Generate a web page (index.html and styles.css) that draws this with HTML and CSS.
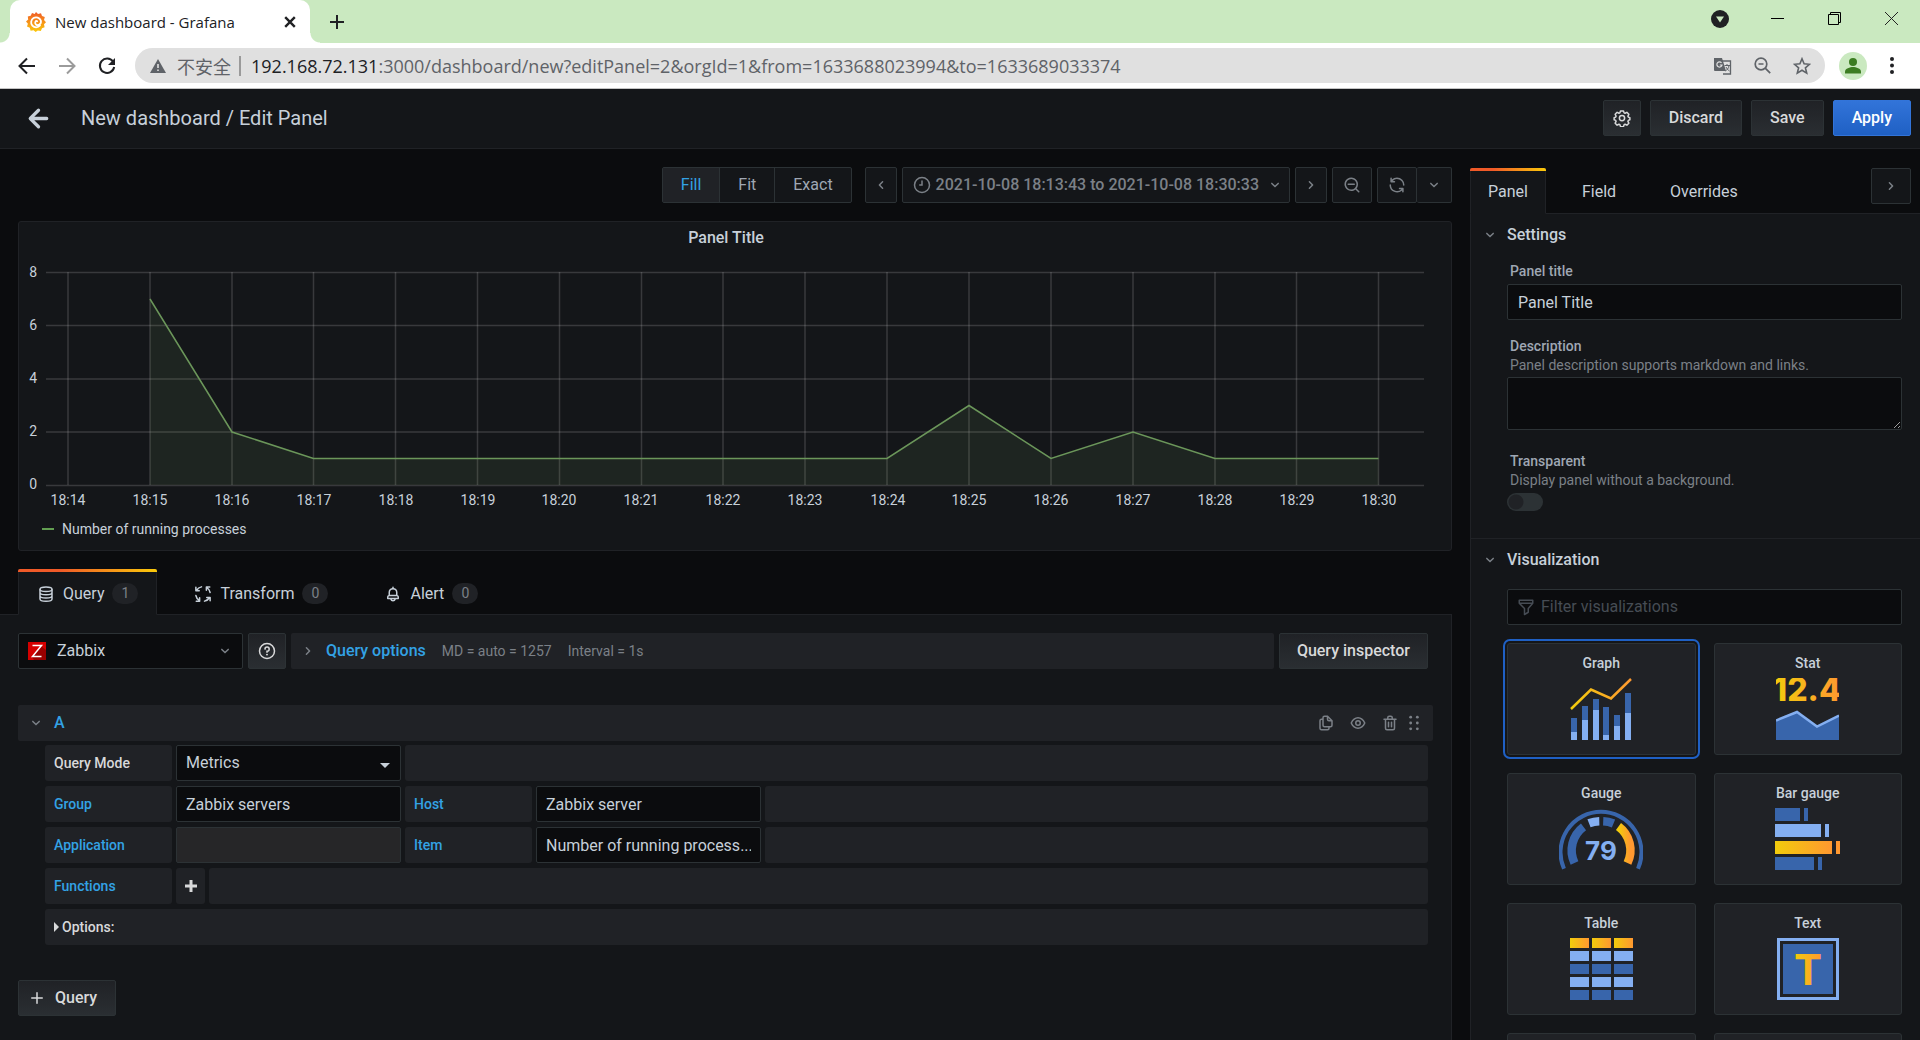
FILE: index.html
```html
<!DOCTYPE html>
<html lang="en">
<head>
<meta charset="utf-8">
<title>New dashboard - Grafana</title>
<link rel="stylesheet" href="styles.css">
</head>
<body>
<svg class="defs" aria-hidden="true">
  <defs>
    <linearGradient id="warm" x1="0" x2="1" y1="0" y2="0"><stop offset="0" stop-color="#f2cc0c"/><stop offset="1" stop-color="#ff9830"/></linearGradient>
    <linearGradient id="warm-line" gradientUnits="userSpaceOnUse" x1="0" x2="62" y1="0" y2="0"><stop offset="0" stop-color="#f2cc0c"/><stop offset="1" stop-color="#ff9830"/></linearGradient>
    <linearGradient id="logo" x1="0" x2="0" y1="0" y2="1"><stop offset="0" stop-color="#f05a28"/><stop offset="1" stop-color="#fbca0a"/></linearGradient>
  </defs>
  <symbol id="angle-down" viewBox="0 0 24 24"><path d="M17,9.17a1,1,0,0,0-1.41,0L12,12.71,8.46,9.17a1,1,0,0,0-1.41,0,1,1,0,0,0,0,1.42l4.24,4.24a1,1,0,0,0,1.42,0L17,10.59A1,1,0,0,0,17,9.17Z"/></symbol>
  <symbol id="angle-right" viewBox="0 0 24 24"><path d="M14.83,11.29,10.59,7.05a1,1,0,0,0-1.42,0,1,1,0,0,0,0,1.41L12.71,12,9.17,15.54a1,1,0,0,0,0,1.41,1,1,0,0,0,.71.29,1,1,0,0,0,.71-.29l4.24-4.24A1,1,0,0,0,14.83,11.29Z"/></symbol>
  <symbol id="angle-left" viewBox="0 0 24 24"><path d="M9.17,11.29l4.24-4.24a1,1,0,0,1,1.42,0,1,1,0,0,1,0,1.41L11.29,12l3.54,3.54a1,1,0,0,1,0,1.41,1,1,0,0,1-.71.29,1,1,0,0,1-.71-.29L9.17,12.71A1,1,0,0,1,9.17,11.29Z"/></symbol>
  <symbol id="search-minus" viewBox="0 0 24 24"><path d="M21.71,20.29,18,16.61A9,9,0,1,0,16.61,18l3.68,3.68a1,1,0,0,0,1.42,0A1,1,0,0,0,21.71,20.29ZM11,18a7,7,0,1,1,7-7A7,7,0,0,1,11,18Zm4-8H7a1,1,0,0,0,0,2h8a1,1,0,0,0,0-2Z"/></symbol>
  <symbol id="sync" viewBox="0 0 24 24"><path d="M19.91,15.51H15.38a1,1,0,0,0,0,2h2.4A8,8,0,0,1,4,12a1,1,0,0,0-2,0,10,10,0,0,0,16.88,7.23V21a1,1,0,0,0,2,0V16.5A1,1,0,0,0,19.91,15.51ZM12,2A10,10,0,0,0,5.12,4.77V3a1,1,0,0,0-2,0V7.5a1,1,0,0,0,1,1h4.5a1,1,0,0,0,0-2H6.22A8,8,0,0,1,20,12a1,1,0,0,0,2,0A10,10,0,0,0,12,2Z"/></symbol>
  <symbol id="arrow-left" viewBox="5 5 14 14"><path d="M17,11H9.41l3.3-3.29a1,1,0,1,0-1.42-1.42l-5,5a1,1,0,0,0,0,1.42l5,5a1,1,0,0,0,1.42-1.42L9.41,13H17a1,1,0,0,0,0-2Z"/></symbol>
  <symbol id="trash" viewBox="0 0 24 24"><path d="M10,18a1,1,0,0,0,1-1V11a1,1,0,0,0-2,0v6A1,1,0,0,0,10,18ZM20,6H16V5a3,3,0,0,0-3-3H11A3,3,0,0,0,8,5V6H4A1,1,0,0,0,4,8H5V19a3,3,0,0,0,3,3h8a3,3,0,0,0,3-3V8h1a1,1,0,0,0,0-2ZM10,5a1,1,0,0,1,1-1h2a1,1,0,0,1,1,1V6H10Zm7,14a1,1,0,0,1-1,1H8a1,1,0,0,1-1-1V8H17Zm-3-1a1,1,0,0,0,1-1V11a1,1,0,0,0-2,0v6A1,1,0,0,0,14,18Z"/></symbol>
  <symbol id="eye" viewBox="0 0 24 24"><path d="M21.92,11.6C19.9,6.91,16.1,4,12,4S4.1,6.91,2.08,11.6a1,1,0,0,0,0,.8C4.1,17.09,7.9,20,12,20s7.9-2.91,9.92-7.6A1,1,0,0,0,21.92,11.6ZM12,18c-3.17,0-6.17-2.29-7.9-6C5.83,8.29,8.83,6,12,6s6.17,2.29,7.9,6C18.17,15.71,15.17,18,12,18ZM12,8a4,4,0,1,0,4,4A4,4,0,0,0,12,8Zm0,6a2,2,0,1,1,2-2A2,2,0,0,1,12,14Z"/></symbol>
  <symbol id="copy" viewBox="0 0 24 24"><path d="M21,8.94a1.31,1.31,0,0,0-.06-.27l0-.09a1.07,1.07,0,0,0-.19-.28h0l-6-6h0a1.07,1.07,0,0,0-.28-.19.32.32,0,0,0-.09,0A.88.88,0,0,0,14.05,2H10A3,3,0,0,0,7,5V6H6A3,3,0,0,0,3,9V19a3,3,0,0,0,3,3h8a3,3,0,0,0,3-3V18h1a3,3,0,0,0,3-3V9S21,9,21,8.94ZM15,5.41,17.59,8H16a1,1,0,0,1-1-1ZM15,19a1,1,0,0,1-1,1H6a1,1,0,0,1-1-1V9A1,1,0,0,1,6,8H7v7a3,3,0,0,0,3,3h5Zm4-4a1,1,0,0,1-1,1H10a1,1,0,0,1-1-1V5a1,1,0,0,1,1-1h3V7a3,3,0,0,0,3,3h3Z"/></symbol>
  <symbol id="bell" viewBox="0 0 24 24"><path d="M18,13.18V10a6,6,0,0,0-5-5.91V3a1,1,0,0,0-2,0V4.09A6,6,0,0,0,6,10v3.18A3,3,0,0,0,4,16v2a1,1,0,0,0,1,1H8.14a4,4,0,0,0,7.72,0H19a1,1,0,0,0,1-1V16A3,3,0,0,0,18,13.18ZM8,10a4,4,0,0,1,8,0v3H8Zm4,10a2,2,0,0,1-1.72-1h3.44A2,2,0,0,1,12,20Zm6-3H6V16a1,1,0,0,1,1-1H17a1,1,0,0,1,1,1Z"/></symbol>
  <symbol id="clock" viewBox="0 0 24 24"><g fill="none" stroke="currentColor" stroke-width="2" stroke-linecap="round"><circle cx="12" cy="12" r="10"/><path d="M12 6.500V12H9"/></g></symbol>
  <symbol id="cog" viewBox="0 0 24 24"><g fill="none" stroke="currentColor" stroke-width="2" stroke-linejoin="round"><path d="M10 2.500h4l.8 2.700 1.200.5 2.500-1.300 2.600 2.700-1.200 2.400.5 1.300 2.100.9v2.600l-2.100.9-.5 1.300 1.200 2.400-2.600 2.700-2.500-1.300-1.200.5-.8 2.700h-4l-.8-2.700-1.200-.5-2.500 1.300-2.600-2.700 1.200-2.400-.5-1.300-2.100-.9v-2.600l2.100-.9.5-1.300-1.200-2.400 2.600-2.700 2.500 1.300 1.200-.5z"/><circle cx="12" cy="12" r="3.500"/></g></symbol>
  <symbol id="question" viewBox="0 0 24 24"><g fill="none" stroke="currentColor" stroke-width="2" stroke-linecap="round"><circle cx="12" cy="12" r="10"/><path d="M9.300 9.500A2.800 2.800 0 1 1 12 12.400V13.500"/></g><circle cx="12" cy="16.800" r="1.300"/></symbol>
  <symbol id="database" viewBox="0 0 24 24"><g fill="none" stroke="currentColor" stroke-width="2"><ellipse cx="12" cy="5.500" rx="8" ry="3"/><path d="M4 5.500v13c0 1.600 3.600 3 8 3s8-1.400 8-3v-13M4 10c0 1.600 3.600 3 8 3s8-1.400 8-3M4 14.300c0 1.600 3.600 3 8 3s8-1.400 8-3"/></g></symbol>
  <symbol id="process" viewBox="0 0 24 24"><g fill="none" stroke="currentColor" stroke-width="2" stroke-linecap="round" stroke-linejoin="round"><path d="M2.500 3v4.500H7M3.500 7A9.500 9.500 0 0 1 10 2.500M21 2.500h-4.500V7M17 3.500a9.500 9.500 0 0 1 4.500 6.500M21.500 21v-4.500H17M20.500 17a9.500 9.500 0 0 1-6.500 4.500M3 21.500h4.500V17M7 20.500A9.500 9.500 0 0 1 2.500 14"/></g></symbol>
  <symbol id="filter" viewBox="0 0 24 24"><g fill="none" stroke="currentColor" stroke-width="2" stroke-linejoin="round"><path d="M3 3h18v4l-6 7v5l-5 3v-8L3 7zM3 7h18"/></g></symbol>
  <symbol id="plus" viewBox="0 0 24 24"><path d="M19,11H13V5a1,1,0,0,0-2,0v6H5a1,1,0,0,0,0,2h6v6a1,1,0,0,0,2,0V13h6a1,1,0,0,0,0-2Z"/></symbol>
  <symbol id="drag" viewBox="0 0 12 18"><circle cx="2" cy="2" r="1.700"/><circle cx="10" cy="2" r="1.700"/><circle cx="2" cy="9" r="1.700"/><circle cx="10" cy="9" r="1.700"/><circle cx="2" cy="16" r="1.700"/><circle cx="10" cy="16" r="1.700"/></symbol>
</svg>

<div class="window">
  <div class="tabstrip">
    <div class="browser-tab">
      <svg class="favicon" viewBox="0 0 20 20"><path fill="url(#logo)" d="M10 0l2 2 3-.8 1 2.800 2.800 1-.8 3 2 2.300-2 2 .6 3-2.600 1-1.200 2.700-3-.6L9.600 20l-2-1.800-3 .5-.8-2.900L1 14.600l.9-2.800L0 9.600l2.200-2L1.800 4.600l2.900-.8L6 1l2.700.9z"/><path fill="none" stroke="#fff" stroke-width="1.800" stroke-linecap="round" d="M14.800 8.500A5 5 0 1 0 14 13.500M14.800 8.500c1 4-3 5.500-4.800 4-1.800-1.700-.3-4 1.200-3.300"/></svg>
      <span class="browser-tab-title">New dashboard - Grafana</span>
      <button class="bare" aria-label="Close tab"><svg class="close" viewBox="0 0 10 10"><path d="M1 1l8 8M9 1L1 9"/></svg></button>
    </div>
    <button class="bare new-tab" aria-label="New tab"><svg viewBox="0 0 16 16"><path d="M8 1v14M1 8h14"/></svg></button>
    <div class="window-buttons">
      <button class="bare" aria-label="Search tabs"><svg width="18" height="18" viewBox="0 0 18 18"><circle cx="9" cy="9" r="9" fill="#202124"/><path d="M5 6.500h8L9 12.500z" fill="#cae9c0"/></svg></button>
      <button class="bare" aria-label="Minimize"><svg width="13" height="13" viewBox="0 0 13 13"><path d="M0 6.500h13" stroke="#000"/></svg></button>
      <button class="bare" aria-label="Restore"><svg width="13" height="13" viewBox="0 0 13 13"><path d="M.5 2.500h10v10H.5zM2.500 2.500v-2h10v10h-2" fill="none" stroke="#000"/></svg></button>
      <button class="bare" aria-label="Close"><svg width="13" height="13" viewBox="0 0 13 13"><path d="M0 0l13 13M13 0L0 13" stroke="#222"/></svg></button>
    </div>
  </div>

  <div class="addressbar">
    <button class="bare nav" aria-label="Back"><svg viewBox="0 0 18 18"><path d="M17 9H2M9 1.500L1.500 9 9 16.500"/></svg></button>
    <button class="bare nav nav-off" aria-label="Forward"><svg viewBox="0 0 18 18"><path d="M1 9h15M9 1.500L16.500 9 9 16.500"/></svg></button>
    <button class="bare nav" aria-label="Reload"><svg viewBox="0 0 18 18"><path d="M15 4.500A7.200 7.200 0 1 0 16.200 10"/><path d="M17 1v7h-7z" fill="currentColor" stroke="none"/></svg></button>
    <div class="omnibox">
      <svg class="warn" viewBox="0 0 16 14"><path d="M8 0l8 14H0z" fill="#5f6368"/><path d="M8 5v4M8 10.500v1.500" stroke="#e0e0e0" stroke-width="1.600"/></svg>
      <span class="insecure" lang="zh">不安全</span>
      <span class="url" role="textbox" aria-label="Address"><span class="host">192.168.72.131</span>:3000/dashboard/new?editPanel=2&amp;orgId=1&amp;from=1633688023994&amp;to=1633689033374</span>
      <button class="bare" aria-label="Translate"><svg width="18" height="18" viewBox="0 0 18 18"><path d="M7 4h9.500v13H9" fill="none" stroke="#5f6368" stroke-width="1.300"/><path d="M0 1h8l4 13H1q-1 0-1-1z" fill="#5f6368"/><path d="M7.500 5.800A2.600 2.600 0 1 0 8 8H5.800" fill="none" stroke="#e0e0e0" stroke-width="1.200"/><path d="M10.500 8.500H16M13 7v1.500M15 8.500c-.5 3-2 4.500-3.500 5.500M12 10c1 2 2 3 3.500 4" fill="none" stroke="#5f6368"/></svg></button>
      <button class="bare" aria-label="Zoom"><svg width="17" height="17" viewBox="0 0 17 17"><g fill="none" stroke="#5f6368" stroke-width="1.700"><circle cx="7" cy="7" r="5.800"/><path d="M11.200 11.200L16.200 16.200M4.500 7h5"/></g></svg></button>
      <button class="bare" aria-label="Bookmark"><svg width="18" height="18" viewBox="0 0 18 18"><path d="M9 1.800l2.100 5 5.400.5-4.100 3.500 1.300 5.300L9 13.200l-4.700 2.900 1.300-5.300L1.500 7.300l5.400-.5z" fill="none" stroke="#5f6368" stroke-width="1.600"/></svg></button>
    </div>
    <button class="bare profile" aria-label="Profile"><svg viewBox="0 0 28 28"><circle cx="14" cy="14" r="14" fill="#cae9c0"/><circle cx="14" cy="10" r="4" fill="#3c7d22"/><path d="M6 21.500v-2c0-3 5-4.500 8-4.500s8 1.500 8 4.500v2z" fill="#3c7d22"/></svg></button>
    <button class="bare kebab" aria-label="Menu"><svg width="4" height="17" viewBox="0 0 4 17"><circle cx="2" cy="2" r="2"/><circle cx="2" cy="8.500" r="2"/><circle cx="2" cy="15" r="2"/></svg></button>
  </div>

  <header class="app-header">
    <button class="bare back" aria-label="Go back"><svg><use href="#arrow-left"/></svg></button>
    <h1>New dashboard / Edit Panel</h1>
    <button class="btn btn-icon" aria-label="Dashboard settings"><svg class="icon"><use href="#cog"/></svg></button>
    <button class="btn">Discard</button>
    <button class="btn">Save</button>
    <button class="btn btn-primary">Apply</button>
  </header>

  <div class="editor">
    <main class="main">
      <div class="viz-toolbar">
        <div class="radios">
          <label class="radio radio-on"><input type="radio" name="size" checked>Fill</label>
          <label class="radio"><input type="radio" name="size">Fit</label>
          <label class="radio"><input type="radio" name="size">Exact</label>
        </div>
        <div class="timebar">
          <button class="tool tool-narrow" aria-label="Earlier"><svg class="icon"><use href="#angle-left"/></svg></button>
          <button class="tool tool-range"><svg class="icon"><use href="#clock"/></svg><span>2021-10-08 18:13:43 to 2021-10-08 18:30:33</span><svg class="icon"><use href="#angle-down"/></svg></button>
          <button class="tool tool-narrow" aria-label="Later"><svg class="icon"><use href="#angle-right"/></svg></button>
          <button class="tool" aria-label="Zoom out"><svg class="icon"><use href="#search-minus"/></svg></button>
          <div class="tool-pair">
            <button class="tool" aria-label="Refresh"><svg class="icon"><use href="#sync"/></svg></button>
            <button class="tool tool-drop" aria-label="Refresh interval"><svg class="icon"><use href="#angle-down"/></svg></button>
          </div>
        </div>
      </div>

      <section class="graph-panel">
        <h2>Panel Title</h2>
        <svg class="chart" viewBox="0 0 1432 260">
          <g class="grid">
            <path d="M27 19.500H1405M27 72.500H1405M27 126H1405M27 179H1405M27 232.500H1405"/>
            <path d="M49 19V232M131 19V232M213 19V232M294.500 19V232M376.500 19V232M458.500 19V232M540.500 19V232M622.500 19V232M704 19V232M786 19V232M868 19V232M950 19V232M1032 19V232M1114 19V232M1196 19V232M1277.500 19V232M1359.500 19V232"/>
          </g>
          <path class="area" d="M131 46L213 179L294.500 205.500H868L950 152.500L1032 205.500L1114 179L1196 205.500H1359.500V232H131z"/>
          <path class="line" d="M131 46L213 179L294.500 205.500H868L950 152.500L1032 205.500L1114 179L1196 205.500H1359.500"/>
          <g class="axis-y"><text x="18" y="24">8</text><text x="18" y="77">6</text><text x="18" y="130">4</text><text x="18" y="183">2</text><text x="18" y="236">0</text></g>
          <g class="axis-x"><text x="49" y="252">18:14</text><text x="131" y="252">18:15</text><text x="213" y="252">18:16</text><text x="295" y="252">18:17</text><text x="377" y="252">18:18</text><text x="459" y="252">18:19</text><text x="540" y="252">18:20</text><text x="622" y="252">18:21</text><text x="704" y="252">18:22</text><text x="786" y="252">18:23</text><text x="869" y="252">18:24</text><text x="950" y="252">18:25</text><text x="1032" y="252">18:26</text><text x="1114" y="252">18:27</text><text x="1196" y="252">18:28</text><text x="1278" y="252">18:29</text><text x="1360" y="252">18:30</text></g>
        </svg>
        <div class="legend"><i></i>Number of running processes</div>
      </section>

      <nav class="tabs">
        <a class="tab tab-on" href="#query"><svg class="icon"><use href="#database"/></svg>Query<span class="count">1</span></a>
        <a class="tab" href="#transform"><svg class="icon"><use href="#process"/></svg>Transform<span class="count">0</span></a>
        <a class="tab" href="#alert"><svg class="icon"><use href="#bell"/></svg>Alert<span class="count">0</span></a>
      </nav>

      <section class="query-pane" id="query">
        <div class="source-row">
          <div class="select select-source">
            <svg class="zabbix" viewBox="0 0 18 18"><path d="M0 0h18v18H0z" fill="#d40000"/><path d="M13 4l5 4v10H6l-2-3z" fill="#900"/><path d="M4.500 3.500h9L4.500 14.500h9" fill="none" stroke="#fff" stroke-width="1.500"/></svg>
            <select aria-label="Data source"><option>Zabbix</option></select>
            <svg class="icon"><use href="#angle-down"/></svg>
          </div>
          <button class="btn btn-icon" aria-label="Help"><svg class="icon"><use href="#question"/></svg></button>
          <button class="options-bar"><svg class="icon"><use href="#angle-right"/></svg><b>Query options</b><span>MD = auto = 1257</span><span>Interval = 1s</span></button>
          <button class="btn">Query inspector</button>
        </div>

        <div class="query-head">
          <svg class="icon"><use href="#angle-down"/></svg>
          <b>A</b>
          <button class="bare" aria-label="Duplicate query"><svg class="icon"><use href="#copy"/></svg></button>
          <button class="bare" aria-label="Hide query"><svg class="icon"><use href="#eye"/></svg></button>
          <button class="bare" aria-label="Remove query"><svg class="icon"><use href="#trash"/></svg></button>
          <button class="bare" aria-label="Move query"><svg class="grip"><use href="#drag"/></svg></button>
        </div>

        <div class="query-form">
          <div class="row">
            <label class="cell plain" for="mode">Query Mode</label>
            <div class="select select-field"><select id="mode"><option>Metrics</option></select><svg class="caret" viewBox="0 0 10 5"><path d="M0 0h10L5 5z"/></svg></div>
            <span class="cell rest"></span>
          </div>
          <div class="row">
            <label class="cell" for="group">Group</label><input class="field" id="group" value="Zabbix servers">
            <label class="cell" for="host">Host</label><input class="field" id="host" value="Zabbix server">
            <span class="cell rest"></span>
          </div>
          <div class="row">
            <label class="cell" for="application">Application</label><input class="field field-empty" id="application">
            <label class="cell" for="item">Item</label><input class="field" id="item" value="Number of running process...">
            <span class="cell rest"></span>
          </div>
          <div class="row">
            <span class="cell">Functions</span>
            <button class="add-function" aria-label="Add function"><svg width="12" height="12" viewBox="0 0 12 12"><path d="M6 0v12M0 6h12"/></svg></button>
            <span class="cell rest"></span>
          </div>
          <div class="row">
            <button class="cell rest toggle-options"><svg width="5" height="10" viewBox="0 0 5 10"><path d="M0 0l5 5-5 5z"/></svg>Options:</button>
          </div>
        </div>

        <button class="btn add-query"><svg class="icon"><use href="#plus"/></svg>Query</button>
      </section>
    </main>

    <aside class="side">
      <nav class="tabs side-tabs">
        <a class="tab tab-on" href="#panel">Panel</a>
        <a class="tab" href="#field">Field</a>
        <a class="tab" href="#overrides">Overrides</a>
        <button class="tool collapse" aria-label="Collapse options"><svg class="icon"><use href="#angle-right"/></svg></button>
      </nav>
      <section class="group" id="panel">
        <h3><svg class="icon"><use href="#angle-down"/></svg>Settings</h3>
        <div class="group-body">
          <div class="form-item">
            <label for="title">Panel title</label>
            <input class="field" id="title" value="Panel Title">
          </div>
          <div class="form-item">
            <label for="description">Description</label>
            <p>Panel description supports markdown and links.</p>
            <textarea class="field" id="description"></textarea>
          </div>
          <div class="form-item">
            <label for="transparent">Transparent</label>
            <p>Display panel without a background.</p>
            <input class="switch" type="checkbox" id="transparent">
          </div>
        </div>
      </section>
      <section class="group">
        <h3><svg class="icon"><use href="#angle-down"/></svg>Visualization</h3>
        <div class="group-body">
          <div class="filter field">
            <svg class="icon"><use href="#filter"/></svg>
            <input aria-label="Filter visualizations" placeholder="Filter visualizations">
          </div>
          <div class="cards">
            <button class="card card-on">Graph
              <svg viewBox="0 0 62 62"><g fill="#3865ab"><path d="M1 40h6v22H1zM12 28h6v34h-6zM23 21h6v41h-6zM33 29h6v33h-6zM44 37h6v25h-6zM55 15h6v47h-6z"/></g><g fill="#84aff1"><path d="M1 54h6v8H1zM12 42h6v20h-6zM23 32h6v30h-6zM33 57h6v5h-6zM44 48h6v14h-6zM55 35h6v27h-6z"/></g><path d="M1 31L21 11.500l20 9L61 1" fill="none" stroke="url(#warm-line)" stroke-width="2.500"/></svg></button>
            <button class="card">Stat
              <svg viewBox="0 0 63 62"><text class="stat" x="31" y="23">12.4</text><path d="M0 43l21-9L41 49l22-11v24H0z" fill="#3865ab"/><path d="M0 42.500L21 34 41 48.500l22-11" fill="none" stroke="#84aff1" stroke-width="2.500"/></svg></button>
            <button class="card">Gauge
              <svg viewBox="0 0 84 62"><g fill="none"><path d="M5 60.800A40.500 40.500 0 1 1 79 60.800" stroke="#3865ab" stroke-width="4"/><path d="M15.500 55A29.500 29.500 0 0 1 24.500 18.800" stroke="#3865ab" stroke-width="8.500"/><path d="M30 15.300A29.500 29.500 0 0 1 40.300 13.200" stroke="#84aff1" stroke-width="8.500"/><path d="M44.200 13.200A29.500 29.500 0 0 1 54.500 15.500" stroke="#3865ab" stroke-width="8.500"/><path d="M59.500 18.500A29.500 29.500 0 0 1 68.500 55" stroke="url(#warm)" stroke-width="8.500"/></g><text class="gauge" x="42" y="52">79</text></svg></button>
            <button class="card">Bar gauge
              <svg viewBox="0 0 66 62"><path d="M0 0h25v13H0zM29 0h4v13h-4zM0 49h39v13H0zM43 49h4v13h-4z" fill="#3865ab"/><path d="M0 16h46v13H0zM50 16h4v13h-4z" fill="#84aff1"/><path d="M0 33h57v13H0z" fill="url(#warm)"/><path d="M61 33h4v13h-4z" fill="#ff9830"/></svg></button>
            <button class="card">Table
              <svg viewBox="0 0 63 62"><g fill="url(#warm)"><rect width="19" height="10"/><rect x="22" width="19" height="10"/><rect x="44" width="19" height="10"/></g><path d="M0 13h19v10H0zM22 13h19v10H22zM44 13h19v10H44zM0 39h19v10H0zM22 39h19v10H22zM44 39h19v10H44z" fill="#84aff1"/><path d="M0 26h19v10H0zM22 26h19v10H22zM44 26h19v10H44zM0 52h19v10H0zM22 52h19v10H22zM44 52h19v10H44z" fill="#3865ab"/></svg></button>
            <button class="card">Text
              <svg viewBox="0 0 62 62"><path d="M1.500 1.500h59v59h-59z" fill="none" stroke="#84aff1" stroke-width="3"/><path d="M6 6h50v50H6z" fill="#3865ab"/><text class="letter" x="31" y="47">T</text></svg></button>
            <button class="card" aria-label="Heatmap"></button>
            <button class="card" aria-label="Alert list"></button>
          </div>
        </div>
      </section>
    </aside>
  </div>
</div>
</body>
</html>
```
FILE: styles.css
```css
* { box-sizing: border-box; }

body {
  margin: 0;
  background: #0b0c0e;
  color: #c7d0d9;
  font: 16px/24px Roboto, "Liberation Sans", sans-serif;
}

h1, h2, h3, p { margin: 0; }
svg { display: block; fill: currentColor; flex: none; }
button, input, select, textarea { font: inherit; color: inherit; margin: 0; }
a { color: inherit; text-decoration: none; }

.defs { position: absolute; width: 0; height: 0; }
.icon { width: 18px; height: 18px; }
.bare { border: 0; padding: 0; background: none; display: flex; align-items: center; justify-content: center; }

.window { height: 100vh; display: flex; flex-direction: column; overflow: hidden; }

/* Browser chrome */
.tabstrip { height: 43px; flex: none; display: flex; background: #cae9c0; padding-left: 10px; color: #202124; }
.browser-tab {
  position: relative;
  width: 300px;
  display: flex;
  align-items: center;
  padding: 0 14px 0 16px;
  background: #fff;
  border-radius: 10px 10px 0 0;
  font: 15px/20px "Open Sans", "Noto Sans", sans-serif;
}
.browser-tab::before,
.browser-tab::after { content: ""; position: absolute; bottom: 0; width: 10px; height: 10px; }
.browser-tab::before { right: 100%; background: radial-gradient(circle at 0 0, #cae9c0 9px, #fff 10px); }
.browser-tab::after { left: 100%; background: radial-gradient(circle at 100% 0, #cae9c0 9px, #fff 10px); }
.favicon { width: 20px; height: 20px; margin-right: 9px; }
.browser-tab-title { flex: 1; white-space: nowrap; }
.close { width: 12px; height: 12px; stroke: #202124; stroke-width: 2; }
.new-tab { margin-left: 19px; }
.new-tab svg { width: 16px; height: 16px; stroke: #202124; stroke-width: 2; }
.window-buttons { margin-left: auto; display: flex; align-items: center; gap: 39px; padding: 0 20px 6px 0; }
.window-buttons .bare { width: 18px; }

.addressbar {
  height: 46px;
  flex: none;
  display: flex;
  align-items: center;
  padding: 0 26px 0 18px;
  background: #fff;
  border-bottom: 1px solid #c4c4c4;
  color: #202124;
}
.nav { margin-right: 22px; }
.nav:nth-child(3) { margin-right: 19px; }
.nav svg { width: 18px; height: 18px; fill: none; stroke: currentColor; stroke-width: 2; }
.nav-off { color: #9b9b9b; }
.omnibox {
  flex: 1;
  min-width: 0;
  height: 35px;
  display: flex;
  align-items: center;
  gap: 22px;
  padding: 0 14px 0 15px;
  border-radius: 18px;
  background: #e0e0e0;
  color: #5f6368;
  font: 18px/24px "Open Sans", "Noto Sans", "Noto Sans CJK SC", sans-serif;
}
.warn { width: 16px; height: 14px; }
.insecure { margin-left: -11px; padding-right: 8px; border-right: 2px solid #9a9a9a; line-height: 20px; white-space: nowrap; font-family: "Noto Sans CJK SC", sans-serif; }
.url { flex: 1; margin-left: -12px; white-space: nowrap; overflow: hidden; }
.host { color: #202124; }
.profile { margin-left: 14px; }
.profile svg { width: 28px; height: 28px; }
.kebab { margin-left: 23px; }

/* Application header */
.app-header {
  height: 60px;
  flex: none;
  display: flex;
  align-items: center;
  gap: 9px;
  padding: 0 9px 1px 27px;
  background: #141619;
  border-bottom: 1px solid #202226;
}
.back svg { width: 23px; height: 23px; }
h1 { flex: 1; padding-left: 22px; font-size: 20px; font-weight: 400; white-space: nowrap; }

.btn {
  height: 36px;
  flex: none;
  display: flex;
  align-items: center;
  padding: 0 18px;
  border: 1px solid #2c3235;
  border-radius: 2px;
  background: linear-gradient(#202226, #2a2e32);
  color: #d8d9da;
  font-weight: 500;
}
.btn-icon { padding: 0 9px; }
.btn-primary { border-color: #3274d9; background: linear-gradient(#3274d9, #1f60c4); color: #fff; }

/* Editor columns */
.editor { flex: 1; min-height: 0; display: flex; gap: 18px; }
.main { flex: 1; min-width: 0; display: flex; flex-direction: column; padding-top: 18px; }

.viz-toolbar { display: flex; justify-content: flex-end; gap: 13px; margin-bottom: 18px; }
.radios { display: flex; border: 1px solid #2c3235; border-radius: 2px; background: #141619; color: #9fa7b3; }
.radio { display: flex; align-items: center; height: 34px; padding: 0 18px; border-right: 1px solid #2c3235; }
.radio:last-child { border-right: 0; }
.radio input { appearance: none; width: 0; height: 0; }
.radio-on { background: #202226; color: #33a2e5; }
.timebar { display: flex; gap: 5px; color: #7b8087; }
.tool {
  height: 36px;
  min-width: 40px;
  display: flex;
  align-items: center;
  justify-content: center;
  padding: 0;
  border: 1px solid #2c3235;
  border-radius: 2px;
  background: #141619;
  color: #7b8087;
}
.tool-narrow { min-width: 32px; }
.tool-range { padding: 0 5px 0 10px; gap: 5px; font-weight: 500; }
.tool-range .icon:last-child { margin-left: 2px; }
.tool-pair { display: flex; }
.tool-drop { min-width: 35px; border-left: 0; }

/* Graph */
.graph-panel { flex: none; height: 330px; margin-left: 18px; border: 1px solid #202226; border-radius: 3px; background: #141619; overflow: hidden; }
h2 { padding: 2px 18px 1px 0; text-align: center; font-size: 16px; font-weight: 500; line-height: 28px; }
.chart { width: 100%; }
.grid { stroke: #c8c8c8; stroke-opacity: .2; stroke-width: 1.500; }
.area { fill: #7eb26d; fill-opacity: .1; }
.line { fill: none; stroke: #6b965a; stroke-width: 1.500; }
.axis-y, .axis-x { font-size: 14px; }
.axis-y { text-anchor: end; }
.axis-x { text-anchor: middle; }
.legend { display: flex; align-items: center; gap: 8px; padding: 4px 0 0 23px; font-size: 14px; }
.legend i { width: 12px; height: 2px; background: #629e51; }

/* Tabs */
.tabs { flex: none; display: flex; padding-left: 18px; }
.tab { position: relative; height: 46px; display: flex; align-items: center; gap: 8px; padding: 3px 18px 0; border: 1px solid transparent; white-space: nowrap; }
.main .tabs { margin-top: 18px; gap: 18px; }
.tab-on { background: #141619; border-color: #202226; border-bottom-color: #141619; border-radius: 2px 2px 0 0; }
.tab-on::before {
  content: "";
  position: absolute;
  left: -1px;
  right: -1px;
  top: -1px;
  height: 3px;
  border-radius: 2px 2px 0 0;
  background: linear-gradient(90deg, #f05a28 30%, #fbca0a);
}
.count { min-width: 26px; padding: 0 8px; border-radius: 11px; background: #202226; color: #7b8087; font-size: 14px; line-height: 21px; text-align: center; }

/* Query editor */
.query-pane { flex: 1; min-height: 0; margin-top: -1px; padding: 18px 18px 0; border: 1px solid #202226; border-left: 0; border-bottom: 0; background: #141619; }
.main .tab-on { z-index: 1; }
.source-row { display: flex; gap: 5px; padding-right: 5px; }
.source-row > .btn:last-child { padding: 0 17px; }
.select { position: relative; display: flex; align-items: center; border: 1px solid #2c3235; border-radius: 2px; background: #0b0c0e; height: 36px; width: 225px; }
.select select { flex: 1; appearance: none; border: 0; background: none; padding: 0 9px; height: 34px; }
.select .icon { margin-right: 8px; color: #7b8087; }
.select-source { padding-left: 9px; }
.select-source select { padding-left: 11px; }
.zabbix { width: 18px; height: 18px; }
.caret { width: 10px; height: 5px; margin: 4px 10px 0 0; }
.options-bar { flex: 1; min-width: 0; height: 36px; display: flex; align-items: center; gap: 16px; padding: 0 8px; border: 0; border-radius: 2px; background: #202226; color: #7b8087; font-size: 14px; white-space: nowrap; }
.options-bar b { margin-left: -7px; color: #33a2e5; font-size: 16px; font-weight: 500; }

.query-head { display: flex; align-items: center; height: 36px; margin-top: 36px; padding: 0 14px 0 9px; gap: 14px; border-radius: 2px; background: #202226; color: #7b8087; }
.query-head b { flex: 1; margin-left: -5px; color: #33a2e5; font-weight: 500; }
.grip { width: 10px; height: 16px; margin-left: -4px; }

.query-form { display: flex; flex-direction: column; gap: 5px; padding: 4px 5px 0 27px; }
.row { display: flex; gap: 4px; }
.cell { width: 127px; height: 36px; flex: none; display: flex; align-items: center; padding: 0 9px; border-radius: 3px; background: #202226; color: #33a2e5; font-size: 14px; font-weight: 500; }
.plain { color: #d8d9da; }
.rest { flex: 1; width: auto; }
.field { width: 225px; height: 36px; padding: 0 9px; border: 1px solid #2c3235; border-radius: 2px; background: #0b0c0e; outline: 0; }
.field-empty { background: #262628; }
.add-function { width: 29px; height: 36px; display: flex; align-items: center; justify-content: center; padding: 0; border: 0; border-radius: 3px; background: #202226; color: #d8d9da; }
.add-function svg { stroke: currentColor; stroke-width: 3; }
.toggle-options { gap: 3px; border: 0; color: #d8d9da; }
.add-query { margin-top: 35px; padding: 0 18px 0 9px; gap: 9px; }

/* Options sidebar */
.side { width: 450px; flex: none; overflow: hidden; padding-top: 19px; display: flex; flex-direction: column; }
.side-tabs { padding: 0 9px 0 0; gap: 18px; background: #0b0c0e; position: relative; z-index: 1; }
.side-tabs .tab { padding: 2px 17px 0; margin-bottom: -1px; }
.collapse { margin-left: auto; }
.group { flex: none; padding: 9px 18px 10px 10px; border: 1px solid #202226; border-width: 1px 0 0 1px; background: #141619; }
h3 { display: flex; align-items: center; gap: 8px; font-size: 16px; font-weight: 500; }
h3 .icon { color: #7b8087; }
.group-body { padding: 15px 0 0 26px; }
.form-item { margin-bottom: 17px; font-size: 14px; line-height: 18px; }
.form-item label { display: block; padding-left: 3px; color: #9fa7b3; font-weight: 500; line-height: 19px; }
.form-item p { padding-left: 3px; color: #7b8087; }
.form-item .field { display: block; width: 100%; margin-top: 3px; font-size: 16px; padding: 0 10px; }
.form-item textarea.field { height: 53px; margin-bottom: 22px; }
.switch { appearance: none; display: block; width: 36px; height: 18px; margin-top: 4px; border-radius: 9px; background: radial-gradient(circle at 9px 9px, #202226 7px, #2c3235 8px); }
.group:last-child .group-body { padding-top: 17px; }
.filter { display: flex; align-items: center; gap: 6px; width: 100%; color: #464c54; }
.filter input { flex: 1; border: 0; padding: 0; background: none; outline: 0; }
.filter input::placeholder { color: #464c54; }
.cards { display: grid; grid-template-columns: 1fr 1fr; gap: 18px; margin-top: 18px; }
.card { height: 112px; display: flex; flex-direction: column; align-items: center; gap: 5px; padding: 9px 0 0; border: 1px solid #2c3235; border-radius: 3px; background: #202226; font-size: 14px; font-weight: 500; line-height: 20px; }
.card svg { height: 62px; }
.card-on { box-shadow: 0 0 0 2px #141619, 0 0 0 4px #1f60c4; }
.stat { font: 800 32px Inter, sans-serif; text-anchor: middle; fill: url(#warm); }
.gauge { font: 700 26px Inter, sans-serif; text-anchor: middle; fill: #84aff1; }
.letter { font: 700 42px Inter, sans-serif; text-anchor: middle; fill: url(#warm); }
```
